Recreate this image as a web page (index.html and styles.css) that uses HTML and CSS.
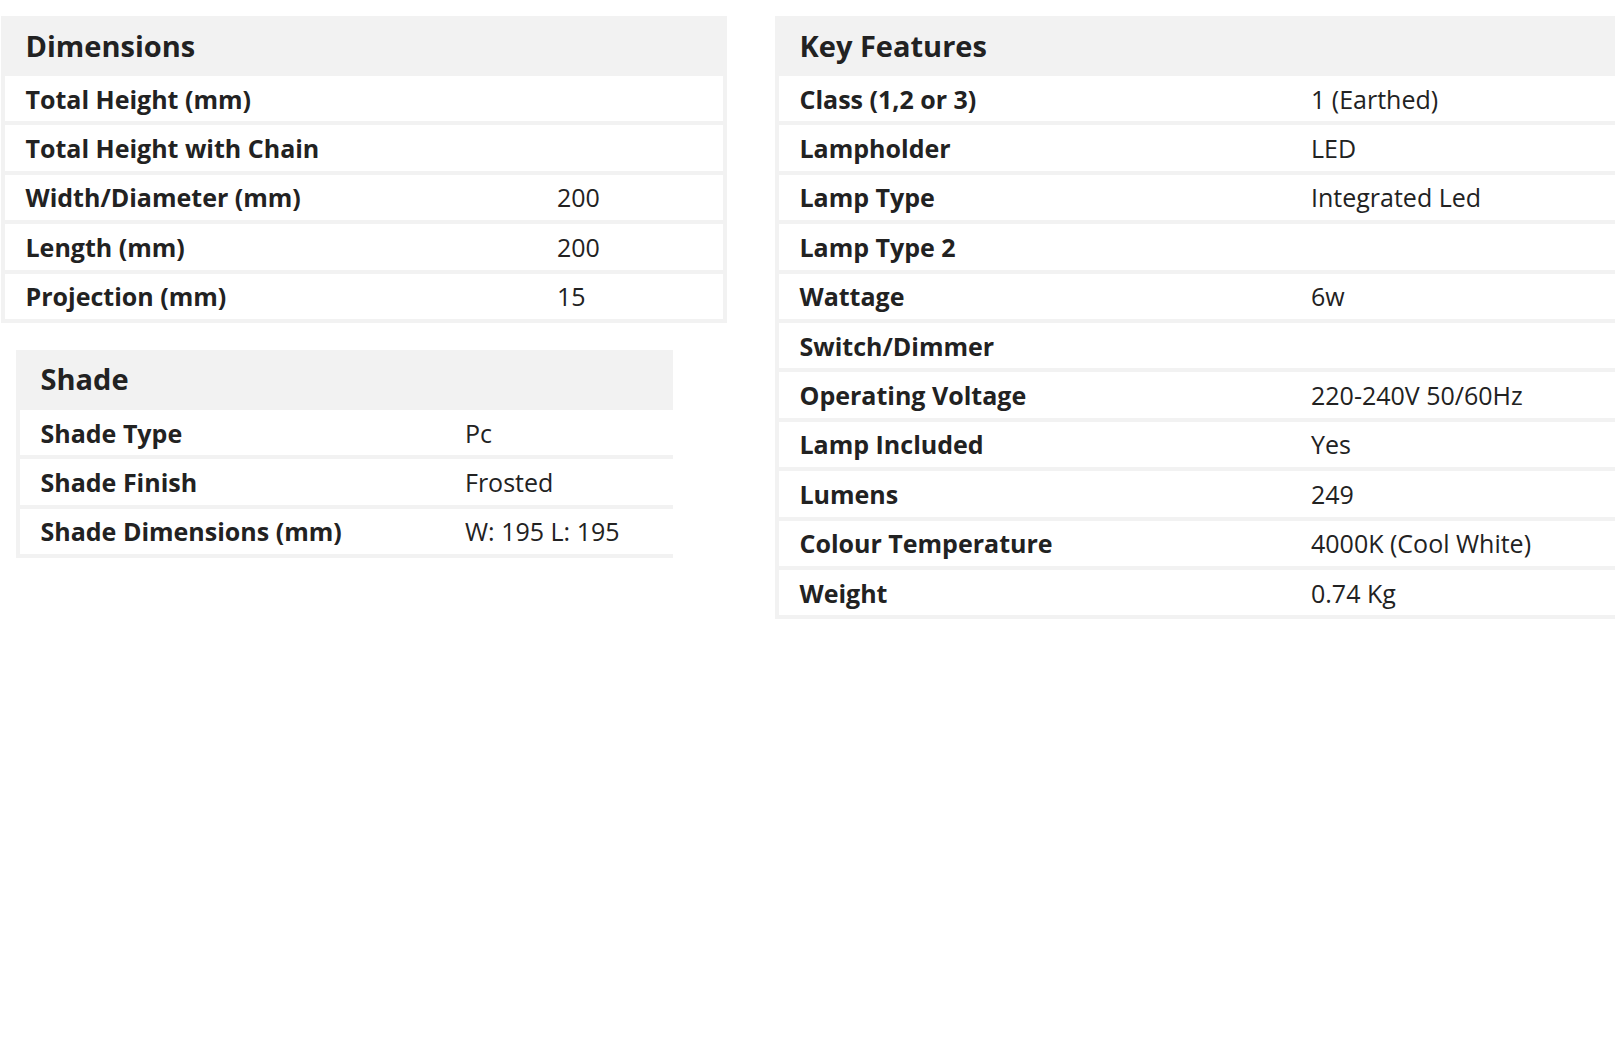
FILE: index.html
```html
<!DOCTYPE html>
<html>
<head>
<meta charset="utf-8">
<link rel="stylesheet" href="styles.css">
</head>
<body>
<div class="page">
  <div class="col-left">
    <div class="spec spec-dim">
      <div class="spec-head">Dimensions</div>
      <div class="spec-row"><div class="lbl">Total Height (mm)</div><div class="val"></div></div>
      <div class="spec-row"><div class="lbl">Total Height with Chain</div><div class="val"></div></div>
      <div class="spec-row"><div class="lbl">Width/Diameter (mm)</div><div class="val">200</div></div>
      <div class="spec-row"><div class="lbl">Length (mm)</div><div class="val">200</div></div>
      <div class="spec-row"><div class="lbl">Projection (mm)</div><div class="val">15</div></div>
    </div>
    <div class="spec spec-shade">
      <div class="spec-head">Shade</div>
      <div class="spec-row"><div class="lbl">Shade Type</div><div class="val">Pc</div></div>
      <div class="spec-row"><div class="lbl">Shade Finish</div><div class="val">Frosted</div></div>
      <div class="spec-row"><div class="lbl">Shade Dimensions (mm)</div><div class="val">W: 195 L: 195</div></div>
    </div>
  </div>
  <div class="col-right">
    <div class="spec spec-key">
      <div class="spec-head">Key Features</div>
      <div class="spec-row"><div class="lbl">Class (1,2 or 3)</div><div class="val">1 (Earthed)</div></div>
      <div class="spec-row"><div class="lbl">Lampholder</div><div class="val">LED</div></div>
      <div class="spec-row"><div class="lbl">Lamp Type</div><div class="val">Integrated Led</div></div>
      <div class="spec-row"><div class="lbl">Lamp Type 2</div><div class="val"></div></div>
      <div class="spec-row"><div class="lbl">Wattage</div><div class="val">6w</div></div>
      <div class="spec-row"><div class="lbl">Switch/Dimmer</div><div class="val"></div></div>
      <div class="spec-row"><div class="lbl">Operating Voltage</div><div class="val">220-240V 50/60Hz</div></div>
      <div class="spec-row"><div class="lbl">Lamp Included</div><div class="val">Yes</div></div>
      <div class="spec-row"><div class="lbl">Lumens</div><div class="val">249</div></div>
      <div class="spec-row"><div class="lbl">Colour Temperature</div><div class="val">4000K (Cool White)</div></div>
      <div class="spec-row"><div class="lbl">Weight</div><div class="val">0.74 Kg</div></div>
    </div>
  </div>
</div>
</body>
</html>
```
FILE: styles.css
```css
html, body {
  margin: 0;
  padding: 0;
  background: #ffffff;
  overflow: hidden;
}
body {
  font-family: "Open Sans", "Noto Sans", sans-serif;
  color: #222222;
}
.page {
  display: flex;
  align-items: flex-start;
  padding: 16px 0 0 1px;
  gap: 48px;
  width: 1615px;
  box-sizing: border-box;
}
.col-left {
  width: 726px;
  flex: none;
  display: flex;
  flex-direction: column;
}
.col-right {
  flex: 1;
  overflow: hidden;
}
.spec {
  background: #f2f2f2;
  display: flex;
  flex-direction: column;
  gap: 4px;
  padding: 0 4px 4px 4px;
}
.spec-head {
  height: 56px;
  box-sizing: border-box;
  display: flex;
  align-items: center;
  padding: 2px 0 0 20.5px;
  font-size: 29px;
  font-weight: 700;
}
.spec-row {
  height: 45.4px;
  display: flex;
  align-items: center;
  background: #ffffff;
}
.lbl {
  font-weight: 700;
  font-size: 25px;
  padding-left: 20.5px;
  box-sizing: border-box;
  flex: none;
}
.val {
  font-size: 25px;
  padding-left: 20px;
  flex: 1;
}
.spec-dim .lbl { width: 532px; }
.spec-shade {
  margin: 27px 0 0 15px;
  width: 657px;
  box-sizing: border-box;
  padding-right: 0;
}
.spec-shade .lbl { width: 425px; }
.spec-key {
  width: 900px;
  padding-right: 4px;
}
.spec-key .lbl { width: 512px; }
```
